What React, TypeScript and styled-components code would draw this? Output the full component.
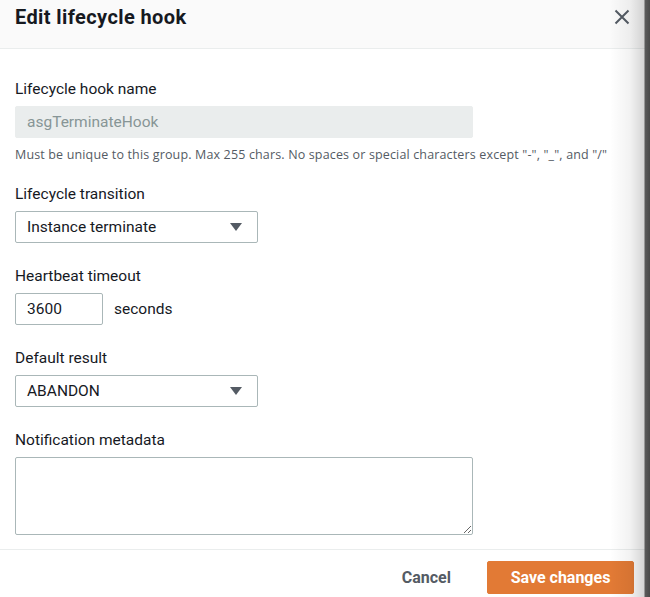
import { createGlobalStyle, styled } from "styled-components";

const GlobalStyle = createGlobalStyle`
  html, body {
    margin: 0;
    padding: 0;
    background: #ffffff;
  }
  body {
    font-family: Roboto, "Liberation Sans", Arial, sans-serif;
    color: #16191f;
  }
  * {
    box-sizing: border-box;
  }
`;

const Dialog = styled.div`
  position: relative;
  width: 650px;
  height: 597px;
  overflow: hidden;
  background: #ffffff;
  display: flex;
  flex-direction: column;

  &::after {
    content: "";
    position: absolute;
    top: 0;
    right: 0;
    bottom: 0;
    width: 40px;
    pointer-events: none;
    background: linear-gradient(
      to right,
      rgba(0, 0, 0, 0) 0px,
      rgba(0, 0, 0, 0.05) 20px,
      rgba(0, 0, 0, 0.16) 34px,
      #5b5b5b 35px,
      #4a4a4a 40px
    );
  }
`;

const Header = styled.div`
  height: 49px;
  background: #fafafa;
  border-bottom: 1px solid #eaeded;
  display: flex;
  justify-content: space-between;
  align-items: flex-start;
  padding: 5px 16px 0 15px;
`;

const Title = styled.h2`
  margin: 0;
  font-size: 20px;
  line-height: 24px;
  letter-spacing: 0.4px;
  font-weight: 700;
  color: #16191f;
`;

const CloseButton = styled.button`
  border: none;
  background: none;
  padding: 0;
  width: 24px;
  height: 24px;
  display: flex;
  align-items: center;
  justify-content: center;
  cursor: pointer;
  color: #545b64;
`;

const Body = styled.div`
  flex: 1;
  padding: 30px 15px 0 15px;
  display: flex;
  flex-direction: column;
  gap: 23px;
`;

const Field = styled.div`
  display: flex;
  flex-direction: column;
`;

const Label = styled.label`
  font-size: 15.5px;
  line-height: 20px;
  color: #16191f;
  margin-bottom: 7px;
`;

const TextInput = styled.input<{ $width: number }>`
  width: ${(p) => p.$width}px;
  height: 32px;
  border: 1px solid #aab7b8;
  border-radius: 2px;
  padding: 0 11px;
  font-family: inherit;
  font-size: 15.5px;
  color: #16191f;
  background: #ffffff;
  outline: none;

  &:disabled {
    background: #eaeded;
    border-color: #eaeded;
    color: #879596;
  }
`;

const Hint = styled.div`
  margin: 9px 0 -2px;
  font-family: "Open Sans", Roboto, sans-serif;
  font-size: 12.5px;
  letter-spacing: 0.15px;
  line-height: 16px;
  color: #545b64;
  white-space: nowrap;
`;

const Select = styled.div`
  width: 243px;
  height: 32px;
  border: 1px solid #aab7b8;
  border-radius: 2px;
  padding: 0 15px 0 11px;
  display: flex;
  align-items: center;
  justify-content: space-between;
  font-size: 15.5px;
  color: #16191f;
`;

const Caret = styled.span`
  width: 0;
  height: 0;
  border-left: 6px solid transparent;
  border-right: 6px solid transparent;
  border-top: 8px solid #545b64;
`;

const InlineRow = styled.div`
  display: flex;
  align-items: center;
  gap: 11px;
`;

const Unit = styled.span`
  font-size: 15.5px;
  color: #16191f;
`;

const TextArea = styled.textarea`
  width: 458px;
  height: 78px;
  border: 1px solid #aab7b8;
  border-radius: 2px;
  font-family: inherit;
  font-size: 15px;
  padding: 6px 11px;
  resize: vertical;
  outline: none;
`;

const Footer = styled.div`
  height: 48px;
  border-top: 1px solid #eaeded;
  display: flex;
  justify-content: flex-end;
  align-items: flex-start;
  gap: 15px;
  padding: 11px 16px 0 0;
`;

const Button = styled.button<{ $primary?: boolean }>`
  height: 33px;
  padding: 0 20px;
  border-radius: 2px;
  font-family: inherit;
  font-size: 16px;
  font-weight: 700;
  cursor: pointer;
  border: 1px solid ${(p) => (p.$primary ? "#e27a35" : "transparent")};
  background: ${(p) => (p.$primary ? "#e27a35" : "transparent")};
  color: ${(p) => (p.$primary ? "#ffffff" : "#545b64")};
  min-width: ${(p) => (p.$primary ? "147px" : "auto")};
`;

export default function App() {
  return (
    <>
      <GlobalStyle />
      <Dialog>
        <Header>
          <Title>Edit lifecycle hook</Title>
          <CloseButton aria-label="Close">
            <svg width="16" height="16" viewBox="0 0 16 16" fill="none">
              <path d="M1.5 1.5l13 13M14.5 1.5l-13 13" stroke="currentColor" strokeWidth="2" />
            </svg>
          </CloseButton>
        </Header>
        <Body>
          <Field>
            <Label>Lifecycle hook name</Label>
            <TextInput $width={458} value="asgTerminateHook" disabled readOnly />
            <Hint>
              Must be unique to this group. Max 255 chars. No spaces or special characters except "-", "_", and "/"
            </Hint>
          </Field>
          <Field>
            <Label>Lifecycle transition</Label>
            <Select>
              <span>Instance terminate</span>
              <Caret />
            </Select>
          </Field>
          <Field>
            <Label>Heartbeat timeout</Label>
            <InlineRow>
              <TextInput $width={88} defaultValue="3600" />
              <Unit>seconds</Unit>
            </InlineRow>
          </Field>
          <Field>
            <Label>Default result</Label>
            <Select>
              <span>ABANDON</span>
              <Caret />
            </Select>
          </Field>
          <Field>
            <Label>Notification metadata</Label>
            <TextArea />
          </Field>
        </Body>
        <Footer>
          <Button>Cancel</Button>
          <Button $primary>Save changes</Button>
        </Footer>
      </Dialog>
    </>
  );
}
